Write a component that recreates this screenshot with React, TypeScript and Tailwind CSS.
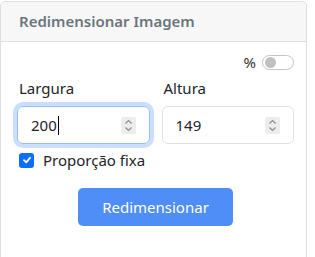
import React from "react";

function Spinner() {
  return (
    <div className="w-[15px] h-[17px] bg-[#ececec] rounded-[2px] flex items-center justify-center">
      <svg width="9" height="13" viewBox="0 0 9 13" fill="none" stroke="#8a8a8a" strokeWidth="1.1">
        <path d="M1.5 4.5 L4.5 1.5 L7.5 4.5" />
        <path d="M1.5 8.5 L4.5 11.5 L7.5 8.5" />
      </svg>
    </div>
  );
}

export default function App() {
  const font = { fontFamily: '"Segoe UI", "Noto Sans", "Open Sans", sans-serif' };
  return (
    <div className="w-[315px] h-[257px] bg-white overflow-hidden" style={font}>
      <div className="mt-[1px] w-[307px] h-[280px] border border-[#dfdfdf] rounded-[5px] overflow-hidden">
        <div className="h-[40px] bg-[#f7f7f7] border-b border-[#dfdfdf] flex items-center pl-[18px]">
          <span className="text-[15px] font-semibold text-[#6c757d]">Redimensionar Imagem</span>
        </div>
        <div className="pl-[16px] pr-[12px] pt-[12px]">
          <div className="flex justify-end items-center h-[16px] gap-[6px]">
            <span className="text-[15px] text-[#333] leading-none">%</span>
            <div className="w-[32px] h-[15px] rounded-full border border-[#c4c4c4] flex items-center px-[2px]">
              <div className="w-[11px] h-[11px] rounded-full bg-[#c0c0c0]" />
            </div>
          </div>
          <div className="grid grid-cols-2 gap-x-[12px] mt-[6px]">
            <div>
              <div className="h-[24px] leading-[24px] text-[15px] text-[#212529] pl-[2px]">Largura</div>
              <div className="mt-[6px] h-[38px] border border-[#9cbcf5] rounded-[6px] shadow-[0_0_0_4px_rgba(13,110,253,0.22)] flex items-center pl-[13px] pr-[13px]">
                <span className="text-[15px] text-[#212529] flex items-center">200<span className="inline-block w-[1px] h-[19px] bg-black ml-[1px]" /></span>
                <div className="ml-auto"><Spinner /></div>
              </div>
            </div>
            <div>
              <div className="h-[24px] leading-[24px] text-[15px] text-[#212529] pl-[2px]">Altura</div>
              <div className="mt-[6px] h-[38px] border border-[#dee2e6] rounded-[6px] flex items-center pl-[13px] pr-[13px]">
                <span className="text-[15px] text-[#212529]">149</span>
                <div className="ml-auto"><Spinner /></div>
              </div>
            </div>
          </div>
          <div className="flex items-center h-[20px] mt-[6px] pl-[2px]">
            <div className="w-[15px] h-[15px] rounded-[3px] bg-[#0d6efd] flex items-center justify-center">
              <svg width="10" height="10" viewBox="0 0 10 10" fill="none" stroke="white" strokeWidth="1.8" strokeLinecap="round" strokeLinejoin="round">
                <path d="M2 5.2 L4.2 7.3 L8 2.8" />
              </svg>
            </div>
            <span className="ml-[9px] text-[15px] text-[#212529]">Proporção fixa</span>
          </div>
          <div className="flex justify-center mt-[18px]">
            <button className="w-[155px] h-[38px] rounded-[5px] bg-[#4f8ef7] text-white text-[15px]">Redimensionar</button>
          </div>
        </div>
      </div>
    </div>
  );
}
